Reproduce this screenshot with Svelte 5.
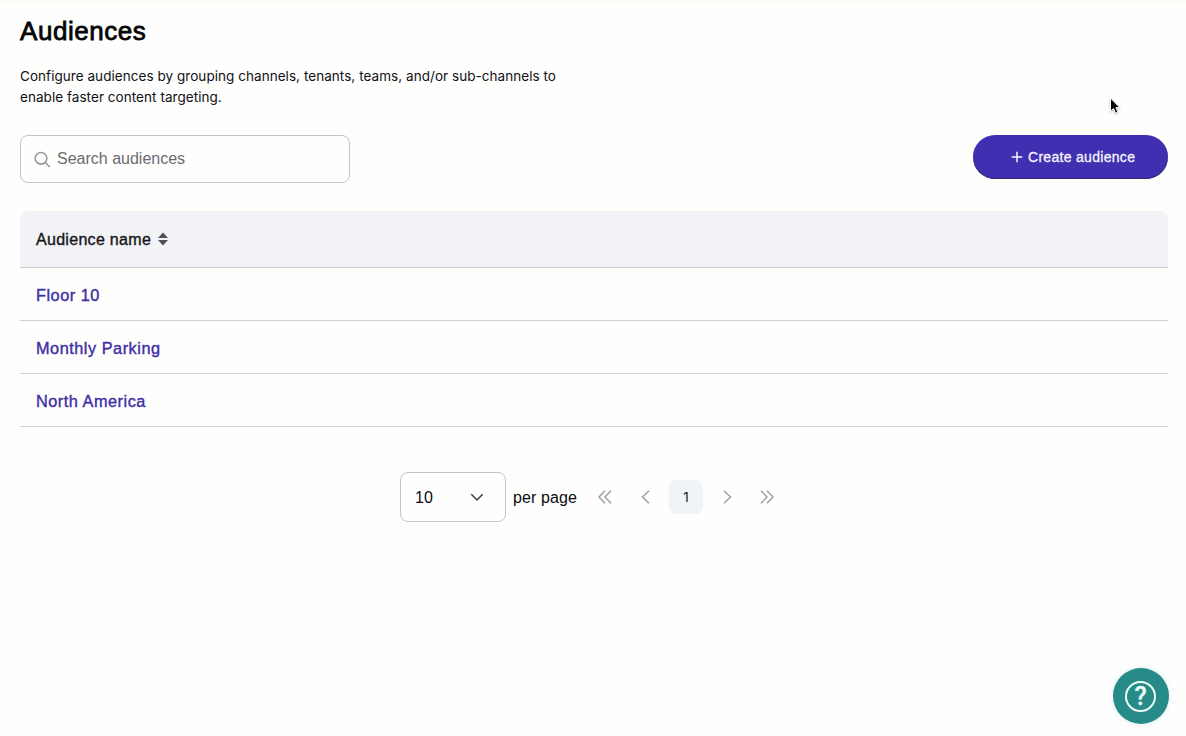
<script>
  let search = $state('');
  let ascending = $state(true);

  const audiences = ['Floor 10', 'Monthly Parking', 'North America'];

  const rows = $derived(
    audiences
      .filter((name) => name.toLowerCase().includes(search.toLowerCase()))
      .sort((a, b) => (ascending ? a.localeCompare(b) : b.localeCompare(a)))
  );
</script>

<main class="page">
  <h1 class="title">Audiences</h1>
  <p class="intro">
    Configure audiences by grouping channels, tenants, teams, and/or sub-channels to<br />
    enable faster content targeting.
  </p>

  <div class="toolbar">
    <label class="search">
      <svg class="search-icon" viewBox="0 0 18 18" width="18" height="18">
        <circle cx="7" cy="7.3" r="5.8" />
        <path d="M11.2 11.5 L15.8 16" />
      </svg>
      <input type="text" placeholder="Search audiences" bind:value={search} />
    </label>
    <button class="create">
      <svg viewBox="0 0 12 12" width="12" height="12">
        <path d="M6 0.7 V11.3 M0.7 6 H11.3" />
      </svg>
      <span>Create audience</span>
    </button>
  </div>

  <div class="table">
    <button class="table-head" onclick={() => (ascending = !ascending)}>
      <span>Audience name</span>
      <svg viewBox="0 0 10 14" width="10" height="14">
        <path d="M5 0.5 L10 6 H0 Z M0 8 H10 L5 13.5 Z" />
      </svg>
    </button>
    {#each rows as name}
      <div class="row"><a href="#audience">{name}</a></div>
    {/each}
  </div>

  <div class="pagination">
    <button class="page-size">
      <span>10</span>
      <svg viewBox="0 0 14 9" width="14" height="9">
        <path d="M1.3 1.2 L7 7 L12.7 1.2" />
      </svg>
    </button>
    <span class="per-page">per page</span>
    <nav class="pager">
      <button aria-label="First page">
        <svg viewBox="0 0 14 14" width="14" height="14"><path d="M7 0.7 L1 7 L7 13.3 M13 0.7 L7 7 L13 13.3" /></svg>
      </button>
      <button aria-label="Previous page">
        <svg viewBox="0 0 14 14" width="14" height="14"><path d="M10 0.7 L3.5 7 L10 13.3" /></svg>
      </button>
      <button class="current">1</button>
      <button aria-label="Next page">
        <svg viewBox="0 0 14 14" width="14" height="14"><path d="M4 0.7 L10.5 7 L4 13.3" /></svg>
      </button>
      <button aria-label="Last page">
        <svg viewBox="0 0 14 14" width="14" height="14"><path d="M1 0.7 L7 7 L1 13.3 M7 0.7 L13 7 L7 13.3" /></svg>
      </button>
    </nav>
  </div>
</main>

<!-- mouse pointer -->
<svg class="pointer" viewBox="0 0 13 19" width="13" height="19">
  <path d="M1.5 1 V14.2 L4.5 11.5 L6.6 16.3 L9 15.2 L6.9 10.6 H10.8 Z" />
</svg>

<button class="help" aria-label="Help">
  <span class="help-ring">?</span>
</button>

<style>
  :global(body) {
    background: #fefefd;
    overflow: hidden;
  }

  .page {
    box-sizing: border-box;
    height: 736px;
    padding: 15px 18px 0 20px;
    background: linear-gradient(#f9f8f4, #fefefd 4px);
    color: #0b0b10;
    font-family: 'Liberation Sans', Arial, sans-serif;
  }

  button {
    font: inherit;
    color: inherit;
    border: 0;
    padding: 0;
    margin: 0;
    background: none;
    cursor: pointer;
  }

  svg {
    display: block;
    fill: none;
    flex: none;
  }

  .title {
    margin: 0;
    font-size: 26px;
    line-height: 32px;
    font-weight: 400;
    letter-spacing: 0.55px;
    color: #050507;
    -webkit-text-stroke: 0.8px #050507;
  }

  .intro {
    margin: 19px 0 0;
    font-family: Inter, sans-serif;
    font-size: 13.5px;
    line-height: 21px;
    letter-spacing: 0.05px;
    color: #101016;
    white-space: nowrap;
  }

  .toolbar {
    display: flex;
    justify-content: space-between;
    align-items: flex-start;
    margin-top: 27px;
  }

  .search {
    box-sizing: border-box;
    display: flex;
    align-items: center;
    gap: 5px;
    width: 330px;
    height: 48px;
    padding: 0 13px;
    border: 1px solid #c3c4cb;
    border-radius: 8px;
  }

  .search-icon {
    stroke: #98999d;
    stroke-width: 1.6;
    position: relative;
    top: 1px;
  }

  .search input {
    flex: 1;
    min-width: 0;
    padding: 0;
    border: 0;
    outline: 0;
    background: none;
    font: 16px 'Liberation Sans', Arial, sans-serif;
  }

  .search input::placeholder {
    color: #6b6b71;
    opacity: 1;
  }

  .create {
    box-sizing: border-box;
    display: flex;
    align-items: center;
    gap: 5px;
    width: 195px;
    height: 44px;
    padding-left: 38px;
    border-radius: 22px;
    background: #402fb1;
    box-shadow: inset 0 -1px 1px #32286f;
    color: #f6f5fd;
    font-size: 14px;
    letter-spacing: 0.3px;
    -webkit-text-stroke: 0.3px #f6f5fd;
    white-space: nowrap;
  }

  .create svg {
    stroke: #f6f5fd;
    stroke-width: 1.5;
  }

  .table {
    margin-top: 28px;
  }

  .table-head {
    box-sizing: border-box;
    display: flex;
    align-items: center;
    gap: 7px;
    width: 100%;
    height: 57px;
    padding: 0 16px;
    border-bottom: 1px solid #cbccd1;
    border-radius: 8px 8px 0 0;
    background: #f2f3f6;
    color: #17171b;
    font-size: 16px;
    letter-spacing: 0.3px;
    -webkit-text-stroke: 0.4px #17171b;
  }

  .table-head span {
    padding-top: 2px;
  }

  .table-head svg {
    fill: #505158;
  }

  .row {
    box-sizing: border-box;
    display: flex;
    align-items: center;
    height: 53px;
    padding: 2px 16px 0;
    border-bottom: 1px solid #cfcfd2;
  }

  .row a {
    color: #402fa6;
    font-size: 16.3px;
    letter-spacing: 0.52px;
    text-decoration: none;
    -webkit-text-stroke: 0.4px #402fa6;
  }

  .pagination {
    display: flex;
    align-items: center;
    margin: 45px 0 0 380px;
    font-size: 16px;
  }

  .page-size {
    box-sizing: border-box;
    display: flex;
    align-items: center;
    justify-content: space-between;
    width: 106px;
    height: 50px;
    padding: 0 21px 0 14px;
    border: 1px solid #c3c4cb;
    border-radius: 8px;
  }

  .page-size span {
    padding-top: 2px;
  }

  .page-size svg {
    stroke: #3b3c45;
    stroke-width: 1.5;
  }

  .per-page {
    margin-left: 7px;
    padding-top: 2px;
    width: 75px;
    letter-spacing: 0.1px;
  }

  .pager {
    display: flex;
    gap: 6.5px;
  }

  .pager button {
    display: flex;
    align-items: center;
    justify-content: center;
    width: 34px;
    height: 34px;
    border-radius: 8px;
  }

  .pager svg {
    stroke: #9d9da3;
    stroke-width: 1.4;
  }

  .pager .current {
    background: #eef4f8;
    color: #101d20;
    font-family: Inter, sans-serif;
    font-size: 13.5px;
  }

  .pointer {
    position: absolute;
    left: 1109px;
    top: 97px;
    fill: #050505;
    stroke: #ffffff;
    stroke-width: 1;
    filter: drop-shadow(0 1px 1px #00000040);
  }

  .help {
    position: absolute;
    left: 1113px;
    top: 668px;
    display: flex;
    align-items: center;
    justify-content: center;
    width: 56px;
    height: 56px;
    border-radius: 50%;
    background: #278b88;
    box-shadow: 0 0 5px #b9d9e880;
  }

  .help-ring {
    box-sizing: border-box;
    width: 31px;
    height: 31px;
    margin-right: 1px;
    border: 2px solid #eefcf9;
    border-radius: 50%;
    color: #eefcf9;
    font: 500 25px/28px Roboto, sans-serif;
    -webkit-text-stroke: 0.3px #eefcf9;
    text-align: center;
  }
</style>
